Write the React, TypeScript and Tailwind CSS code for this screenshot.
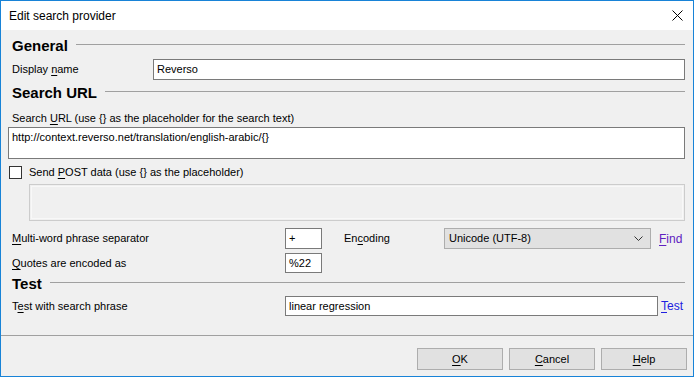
const Mn = ({ children }: { children: string }) => <span className="underline underline-offset-2">{children}</span>;

const Header = ({ title }: { title: string }) => (
  <div className="flex h-[16px] items-start pl-[4px]">
    <span className="text-[15px] font-bold leading-[16px] text-black">{title}</span>
    <div className="ml-[8px] mt-[6px] h-px flex-1 bg-[#a0a0a0]" />
  </div>
);

const App = () => {
  return (
    <div className="flex h-[377px] w-[694px] flex-col border border-[#1883d7] bg-[#f0f0f0] font-['Liberation_Sans',sans-serif] text-[11px] text-black">
      {/* Title bar */}
      <div className="flex h-[29px] items-center justify-between bg-white pl-[8px] pr-[10px]">
        <span className="text-[12px]">Edit search provider</span>
        <svg width="11" height="11" viewBox="0 0 11 11">
          <path d="M0.5 0.5 L10.5 10.5 M10.5 0.5 L0.5 10.5" stroke="#000" strokeWidth="1" />
        </svg>
      </div>

      {/* Body */}
      <div className="flex flex-1 flex-col pl-[7px] pr-[8px] pt-[8px]">
        <Header title="General" />
        <div className="mt-[5px] flex h-[21px] items-center">
          <span className="w-[145px] pl-[4px]">Display <Mn>n</Mn>ame</span>
          <div className="flex h-[21px] flex-1 items-center border border-[#7a7a7a] bg-white px-[3px]">Reverso</div>
        </div>

        <div className="mt-[5px]">
          <Header title="Search URL" />
        </div>
        <div className="mt-[10px] h-[14px] pl-[4px] leading-[14px]">
          Search <Mn>U</Mn>RL (use {"{}"} as the placeholder for the search text)
        </div>
        <div className="mt-[2px] h-[32px] border border-[#7a7a7a] bg-white px-[3px] pt-[2px] leading-[14px]">
          http://context.reverso.net/translation/english-arabic/{"{}"}
        </div>

        <div className="mt-[6px] flex h-[15px] items-center pl-[1px]">
          <div className="h-[13px] w-[13px] border border-[#333] bg-white" />
          <span className="ml-[7px]">Send <Mn>P</Mn>OST data (use {"{}"} as the placeholder)</span>
        </div>
        <div className="ml-[21px] mt-[4px] h-[37px] border border-[#cccccc] bg-[#f0f0f0] p-px">
          <div className="h-full w-full border border-[#f8f8f8]" />
        </div>

        {/* Options */}
        <div className="mt-[7px] flex h-[21px] items-center">
          <span className="w-[277px] pl-[4px]"><Mn>M</Mn>ulti-word phrase separator</span>
          <div className="flex h-[21px] w-[37px] items-center border border-[#7a7a7a] bg-white px-[3px]">+</div>
          <span className="ml-[22px] w-[100px]">En<Mn>c</Mn>oding</span>
          <div className="flex h-[21px] w-[207px] items-center justify-between border border-[#adadad] bg-[#e1e1e1] pl-[4px] pr-[7px]">
            <span>Unicode (UTF-8)</span>
            <svg width="9" height="5" viewBox="0 0 9 5">
              <path d="M0.5 0.5 L4.5 4.5 L8.5 0.5" fill="none" stroke="#333" strokeWidth="1" />
            </svg>
          </div>
          <span className="ml-[8px] text-[12px] text-[#6020c0]"><Mn>F</Mn>ind</span>
        </div>
        <div className="mt-[4px] flex h-[20px] items-center">
          <span className="w-[277px] pl-[4px]"><Mn>Q</Mn>uotes are encoded as</span>
          <div className="flex h-[20px] w-[37px] items-center border border-[#7a7a7a] bg-white px-[3px]">%22</div>
        </div>

        <div className="mt-[3px]">
          <Header title="Test" />
        </div>
        <div className="mt-[4px] flex h-[20px] items-center">
          <span className="w-[277px] pl-[4px]">T<Mn>e</Mn>st with search phrase</span>
          <div className="flex h-[20px] w-[373px] items-center border border-[#7a7a7a] bg-white px-[3px]">linear regression</div>
          <span className="ml-[3px] text-[12px] text-[#2020e0]"><Mn>T</Mn>est</span>
        </div>
      </div>

      {/* Footer */}
      <div className="h-px bg-[#a0a0a0]" />
      <div className="flex h-[40px] items-start justify-end gap-[6px] pr-[6px] pt-[12px]">
        {["OK", "Cancel", "Help"].map((b) => (
          <div key={b} className="flex h-[22px] w-[86px] items-center justify-center border border-[#adadad] bg-[#e1e1e1]">
            <Mn>{b[0]}</Mn>
            {b.slice(1)}
          </div>
        ))}
      </div>
    </div>
  );
};

export default App;
